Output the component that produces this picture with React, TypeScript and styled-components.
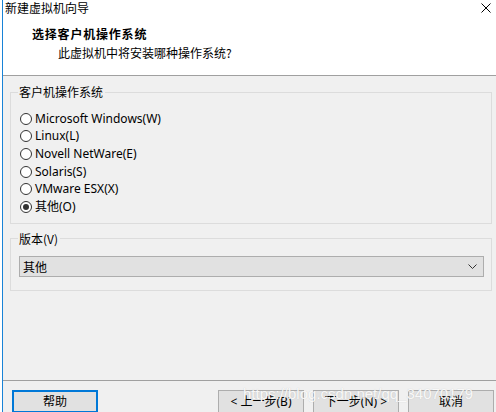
import React from "react";
import styled, { createGlobalStyle } from "styled-components";

const GlobalStyle = createGlobalStyle`
    html, body {
        margin: 0;
        padding: 0;
        background: #ffffff;
        overflow: hidden;
    }
    body {
        font-family: "Noto Sans", "Noto Sans CJK SC", sans-serif;
        font-size: 12px;
        color: #000;
    }
`

const Window = styled.div`
    position: relative;
    margin-left: 2px;
    width: 494px;
    height: 412px;
    border-left: 1px solid #1883d7;
    background: #f0f0f0;
    display: flex;
    flex-direction: column;
    overflow: hidden;
`

const Header = styled.header`
    height: 75px;
    flex: none;
    background: #fff;
    border-bottom: 1px solid #a0a0a0;
    box-sizing: content-box;
    position: relative;
`

const Caption = styled.div`
    padding: 1px 0 0 2px;
    line-height: 14px;
    font-family: "Noto Sans CJK SC", sans-serif;
`

const CloseBox = styled.span`
    position: absolute;
    top: 3px;
    right: 6px;
    width: 10px;
    height: 10px;
    display: flex;
`

const PageTitle = styled.h1`
    margin: 11px 0 0 29px;
    font-size: 12px;
    line-height: 16px;
    font-weight: bold;
    letter-spacing: 0.8px;
    font-family: "Noto Sans CJK SC", sans-serif;
`

const PageHint = styled.p`
    margin: 3px 0 0 55px;
    line-height: 16px;
    font-family: "Noto Sans CJK SC", sans-serif;
`

const Content = styled.main`
    flex: 1;
    padding: 8px 5px 0 7px;
    display: flex;
    flex-direction: column;
    gap: 7px;
`

const Group = styled.fieldset<{ $pad: string; $indent: number }>`
    margin: 0;
    padding: ${(p) => p.$pad};
    border: 1px solid #dcdcdc;
    min-width: 0;

    legend {
        margin-left: ${(p) => p.$indent}px;
    }
`

const GroupLabel = styled.legend`
    padding: 0 2px 0 1px;
    line-height: 16px;
    font-family: "Noto Sans CJK SC", sans-serif;
`

const RadioRow = styled.label`
    display: flex;
    align-items: center;
    gap: 3px;
    height: 17.6px;
    line-height: 16px;
`

const RadioDot = styled.span<{ $on?: boolean }>`
    width: 12px;
    height: 12px;
    box-sizing: border-box;
    border: 1px solid #333;
    border-radius: 50%;
    background: #fff;
    display: flex;
    align-items: center;
    justify-content: center;
    &::after {
        content: "";
        width: 6px;
        height: 6px;
        border-radius: 50%;
        background: ${(p) => (p.$on ? "#333" : "transparent")};
    }
`

const Select = styled.div`
    height: 21px;
    box-sizing: border-box;
    border: 1px solid #adadad;
    background: #e1e1e1;
    display: flex;
    align-items: center;
    justify-content: space-between;
    padding: 0 6px 0 3px;
    font-family: "Noto Sans CJK SC", sans-serif;
`

const Footer = styled.footer`
    flex: none;
    height: 32px;
    box-sizing: border-box;
    border-top: 1px solid #a0a0a0;
    padding: 9px 3px 0 9px;
    display: flex;
    align-items: flex-start;
    position: relative;
`

const Spacer = styled.div`
    flex: 1;
`

const ButtonBar = styled.div`
    display: flex;
    gap: 9px;
`

const Button = styled.button<{ $focus?: boolean }>`
    flex: none;
    width: 86px;
    height: 23px;
    box-sizing: border-box;
    margin: 0;
    padding: 0;
    border: ${(p) => (p.$focus ? "2px solid #0078d7" : "1px solid #adadad")};
    background: #e1e1e1;
    font-family: "Noto Sans", "Noto Sans CJK SC", sans-serif;
    font-size: 12px;
    color: #000;
    line-height: 16px;
`

const Watermark = styled.span`
    position: absolute;
    left: 240px;
    top: 4px;
    font-family: "Liberation Sans", sans-serif;
    font-size: 15px;
    color: rgba(255, 255, 255, 0.9);
    text-shadow: 0 0 1px rgba(150, 150, 150, 0.45);
    pointer-events: none;
    white-space: nowrap;
`

const systems = [
    "Microsoft Windows(W)",
    "Linux(L)",
    "Novell NetWare(E)",
    "Solaris(S)",
    "VMware ESX(X)",
    "其他(O)",
]

function App() {
    const picked = 5

    return (
        <>
            <GlobalStyle />
            <Window>
                <Header>
                    <Caption>新建虚拟机向导</Caption>
                    <CloseBox>
                        <svg width="10" height="10" viewBox="0 0 10 10">
                            <path d="M0.5 0.5 L9.5 9.5 M9.5 0.5 L0.5 9.5" stroke="#000" strokeWidth="1" fill="none" />
                        </svg>
                    </CloseBox>
                    <PageTitle>选择客户机操作系统</PageTitle>
                    <PageHint>此虚拟机中将安装哪种操作系统?</PageHint>
                </Header>
                <Content>
                    <Group $pad="10px 0 7px 9px" $indent={-2}>
                        <GroupLabel>客户机操作系统</GroupLabel>
                        {systems.map((name, i) => (
                            <RadioRow key={name}>
                                <RadioDot $on={i === picked} />
                                {name}
                            </RadioRow>
                        ))}
                    </Group>
                    <Group $pad="9px 7px 13px 8px" $indent={-1}>
                        <GroupLabel>版本(V)</GroupLabel>
                        <Select>
                            <span>其他</span>
                            <svg width="9" height="5" viewBox="0 0 9 5">
                                <path d="M0.5 0.5 L4.5 4.5 L8.5 0.5" stroke="#333" strokeWidth="1" fill="none" />
                            </svg>
                        </Select>
                    </Group>
                </Content>
                <Footer>
                    <Button $focus>帮助</Button>
                    <Spacer />
                    <ButtonBar>
                        <Button>&lt; 上一步(B)</Button>
                        <Button>下一步(N) &gt;</Button>
                        <Button>取消</Button>
                    </ButtonBar>
                    <Watermark>https://blog.csdn.net/qq_34070179</Watermark>
                </Footer>
            </Window>
        </>
    )
}

export default App;
